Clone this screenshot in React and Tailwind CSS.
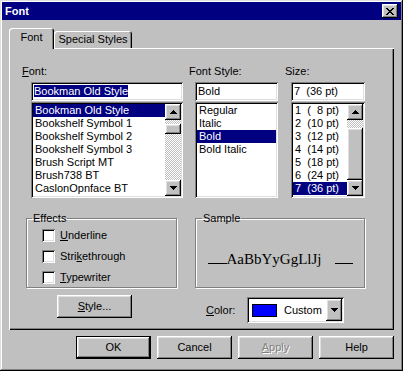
import React from 'react';

const RAISED = 'shadow-[inset_-1px_-1px_#000,inset_1px_1px_#fff,inset_-2px_-2px_#808080,inset_2px_2px_#dfdfdf]';
const SUNKEN = 'shadow-[inset_1px_1px_#808080,inset_-1px_-1px_#fff,inset_2px_2px_#000,inset_-2px_-2px_#dfdfdf]';
const DITHER = 'bg-[image:repeating-conic-gradient(#fff_0%_25%,#c0c0c0_0%_50%)] bg-[length:2px_2px]';

const fonts = [
  'Bookman Old Style',
  'Bookshelf Symbol 1',
  'Bookshelf Symbol 2',
  'Bookshelf Symbol 3',
  'Brush Script MT',
  'Brush738 BT',
  'CaslonOpnface BT',
];
const styles = ['Regular', 'Italic', 'Bold', 'Bold Italic'];
const sizes = ['1  (  8 pt)', '2  (10 pt)', '3  (12 pt)', '4  (14 pt)', '5  (18 pt)', '6  (24 pt)', '7  (36 pt)'];

// little bitmap triangle used on scroll / combo buttons
const Arrow = ({ dir = 'down' }) => {
  const rows = dir === 'down' ? [7, 5, 3, 1] : [1, 3, 5, 7];
  return (
    <svg width="7" height="4" viewBox="0 0 7 4" shapeRendering="crispEdges">
      {rows.map((w, i) => (
        <rect key={i} x={(7 - w) / 2} y={i} width={w} height="1" fill="#000" />
      ))}
    </svg>
  );
};

const CloseGlyph = () => {
  const px = [
    [0, 0], [1, 0], [6, 0], [7, 0],
    [1, 1], [2, 1], [5, 1], [6, 1],
    [2, 2], [3, 2], [4, 2], [5, 2],
    [3, 3], [4, 3],
    [2, 4], [3, 4], [4, 4], [5, 4],
    [1, 5], [2, 5], [5, 5], [6, 5],
    [0, 6], [1, 6], [6, 6], [7, 6],
  ];
  return (
    <svg width="8" height="7" viewBox="0 0 8 7" shapeRendering="crispEdges">
      {px.map(([x, y], i) => (
        <rect key={i} x={x} y={y} width="1" height="1" fill="#000" />
      ))}
    </svg>
  );
};

const ScrollBtn = ({ dir }) => (
  <div className={`w-[16px] h-[16px] shrink-0 bg-[#c0c0c0] ${RAISED} flex items-center justify-center`}>
    <Arrow dir={dir} />
  </div>
);

const Item = ({ text, selected }) => (
  <div className={`h-[13px] leading-[13px] pl-[2px] whitespace-pre ${selected ? 'bg-[#000080] text-white' : ''}`}>
    {text}
  </div>
);

const Edit = ({ children }) => (
  <div className={`h-[19px] bg-white ${SUNKEN} pl-[3px] pt-[3px] whitespace-pre`}>{children}</div>
);

const Check = ({ children }) => (
  <div className="flex items-center h-[13px]">
    <div className={`w-[13px] h-[13px] bg-white ${SUNKEN}`} />
    <span className="ml-[5px]">{children}</span>
  </div>
);

const Button = ({ children, isDefault, className = '' }) => (
  <div
    className={`w-[75px] h-[23px] bg-[#c0c0c0] flex items-center justify-center ${RAISED} ${
      isDefault ? 'border border-black' : ''
    } ${className}`}
  >
    {children}
  </div>
);

export default function App() {
  return (
    <div className="w-[403px] h-[371px] bg-[#c0c0c0] p-[2px] flex flex-col font-['Liberation_Sans',Arial,sans-serif] text-[11px] leading-[13px] text-black select-none shadow-[inset_-1px_-1px_#000,inset_1px_1px_#dfdfdf,inset_-2px_-2px_#808080,inset_2px_2px_#fff]">
      {/* title bar */}
      <div className="h-[18px] shrink-0 bg-[#000080] flex items-center justify-between pl-[3px] pr-[3px]">
        <span className="text-white font-bold">Font</span>
        <div className={`w-[16px] h-[14px] bg-[#c0c0c0] ${RAISED} flex items-center justify-center`}>
          <CloseGlyph />
        </div>
      </div>

      {/* tabs */}
      <div className="mt-[8px] ml-[7px] h-[20px] flex items-end">
        <div className="relative z-10 w-[45px] h-[21px] -mb-[1px] bg-[#c0c0c0] rounded-t-[3px] shadow-[inset_1px_1px_#fff,inset_-1px_0_#000,inset_-2px_0_#808080] pt-[3px] text-center">
          Font
        </div>
        <div className="w-[78px] h-[17px] bg-[#c0c0c0] rounded-t-[3px] shadow-[inset_1px_1px_#fff,inset_-1px_0_#000,inset_-2px_0_#808080] pt-[2px] text-center">
          Special Styles
        </div>
      </div>

      {/* tab panel */}
      <div className="mx-[7px] h-[282px] shrink-0 flex flex-col shadow-[inset_1px_1px_#fff,inset_-1px_-1px_#000,inset_-2px_-2px_#808080]">
        <div className="flex mt-[17px] ml-[13px]">
          {/* font */}
          <div className="w-[161px]">
            <div>
              <u>F</u>ont:
            </div>
            <div className="ml-[9px] w-[152px] mt-[4px]">
              <Edit>
                <span className="bg-[#000080] text-white">Bookman Old Style</span>
              </Edit>
              <div className={`mt-[1px] h-[96px] bg-white ${SUNKEN} p-[2px] flex`}>
                <div className="flex-1">
                  {fonts.map((f, i) => (
                    <Item key={f} text={f} selected={i === 0} />
                  ))}
                </div>
                <div className="w-[16px] flex flex-col">
                  <ScrollBtn dir="up" />
                  <div className={`flex-1 ${DITHER} flex flex-col`}>
                    <div className={`mt-[4px] h-[10px] bg-[#c0c0c0] ${RAISED}`} />
                  </div>
                  <ScrollBtn dir="down" />
                </div>
              </div>
            </div>
          </div>

          {/* font style */}
          <div className="ml-[6px] w-[89px]">
            <div>Font Style:</div>
            <div className="ml-[6px] w-[83px] mt-[4px]">
              <Edit>Bold</Edit>
              <div className={`mt-[1px] h-[96px] bg-white ${SUNKEN} p-[2px]`}>
                {styles.map((s, i) => (
                  <Item key={s} text={s} selected={i === 2} />
                ))}
              </div>
            </div>
          </div>

          {/* size */}
          <div className="ml-[7px] w-[80px]">
            <div>Size:</div>
            <div className="ml-[6px] w-[74px] mt-[4px]">
              <Edit>7  (36 pt)</Edit>
              <div className={`mt-[1px] h-[96px] bg-white ${SUNKEN} p-[2px] flex`}>
                <div className="flex-1">
                  {sizes.map((s, i) => (
                    <Item key={s} text={s} selected={i === 6} />
                  ))}
                </div>
                <div className="w-[16px] flex flex-col">
                  <ScrollBtn dir="up" />
                  <div className={`flex-1 ${DITHER} flex flex-col`}>
                    <div className={`mt-[8px] flex-1 bg-[#c0c0c0] ${RAISED}`} />
                  </div>
                  <ScrollBtn dir="down" />
                </div>
              </div>
            </div>
          </div>
        </div>

        {/* group boxes */}
        <div className="flex mt-[14px] ml-[17px]">
          <fieldset className="w-[151px] border border-[#808080] shadow-[1px_1px_#fff,inset_1px_1px_#fff]">
            <legend className="ml-[5px] px-[1px] leading-[13px]">Effects</legend>
            <div className="h-[62px] pt-[4px] pl-[15px] flex flex-col gap-[8px]">
              <Check>
                <u>U</u>nderline
              </Check>
              <Check>
                Stri<u>k</u>ethrough
              </Check>
              <Check>
                <u>T</u>ypewriter
              </Check>
            </div>
          </fieldset>

          <fieldset className="ml-[18px] w-[170px] border border-[#808080] shadow-[1px_1px_#fff,inset_1px_1px_#fff]">
            <legend className="ml-[6px] px-[1px] leading-[13px]">Sample</legend>
            <div className="h-[62px] flex items-center justify-center pt-[5px]">
              <div className="flex items-baseline font-['Liberation_Serif','Times_New_Roman',serif] text-[15px] leading-[18px]">
                <span className="inline-block w-[19px] border-b border-black" />
                <span>AaBbYyGgLlJj</span>
                <span className="inline-block ml-[13px] w-[18px] border-b border-black" />
              </div>
            </div>
          </fieldset>
        </div>

        {/* style button + colour */}
        <div className="flex mt-[7px]">
          <Button className="ml-[48px]">
            <span>
              <u>S</u>tyle...
            </span>
          </Button>
          <div className="ml-[74px] mt-[2px] flex items-center">
            <div className="w-[41px]">
              <u>C</u>olor:
            </div>
            <div className={`w-[97px] h-[26px] bg-white ${SUNKEN} p-[2px] flex items-center`}>
              <div className="ml-[3px] w-[25px] h-[13px] bg-[#0000ff] border border-black" />
              <span className="ml-[7px] flex-1">Custom</span>
              <div className={`w-[16px] h-full bg-[#c0c0c0] ${RAISED} flex items-center justify-center`}>
                <Arrow dir="down" />
              </div>
            </div>
          </div>
        </div>
      </div>

      {/* dialog buttons */}
      <div className="mt-[6px] mr-[7px] flex justify-end gap-[6px]">
        <Button isDefault>OK</Button>
        <Button>Cancel</Button>
        <Button>
          <span className="text-[#808080] [text-shadow:1px_1px_#fff]">
            <u>A</u>pply
          </span>
        </Button>
        <Button>Help</Button>
      </div>
    </div>
  );
}
